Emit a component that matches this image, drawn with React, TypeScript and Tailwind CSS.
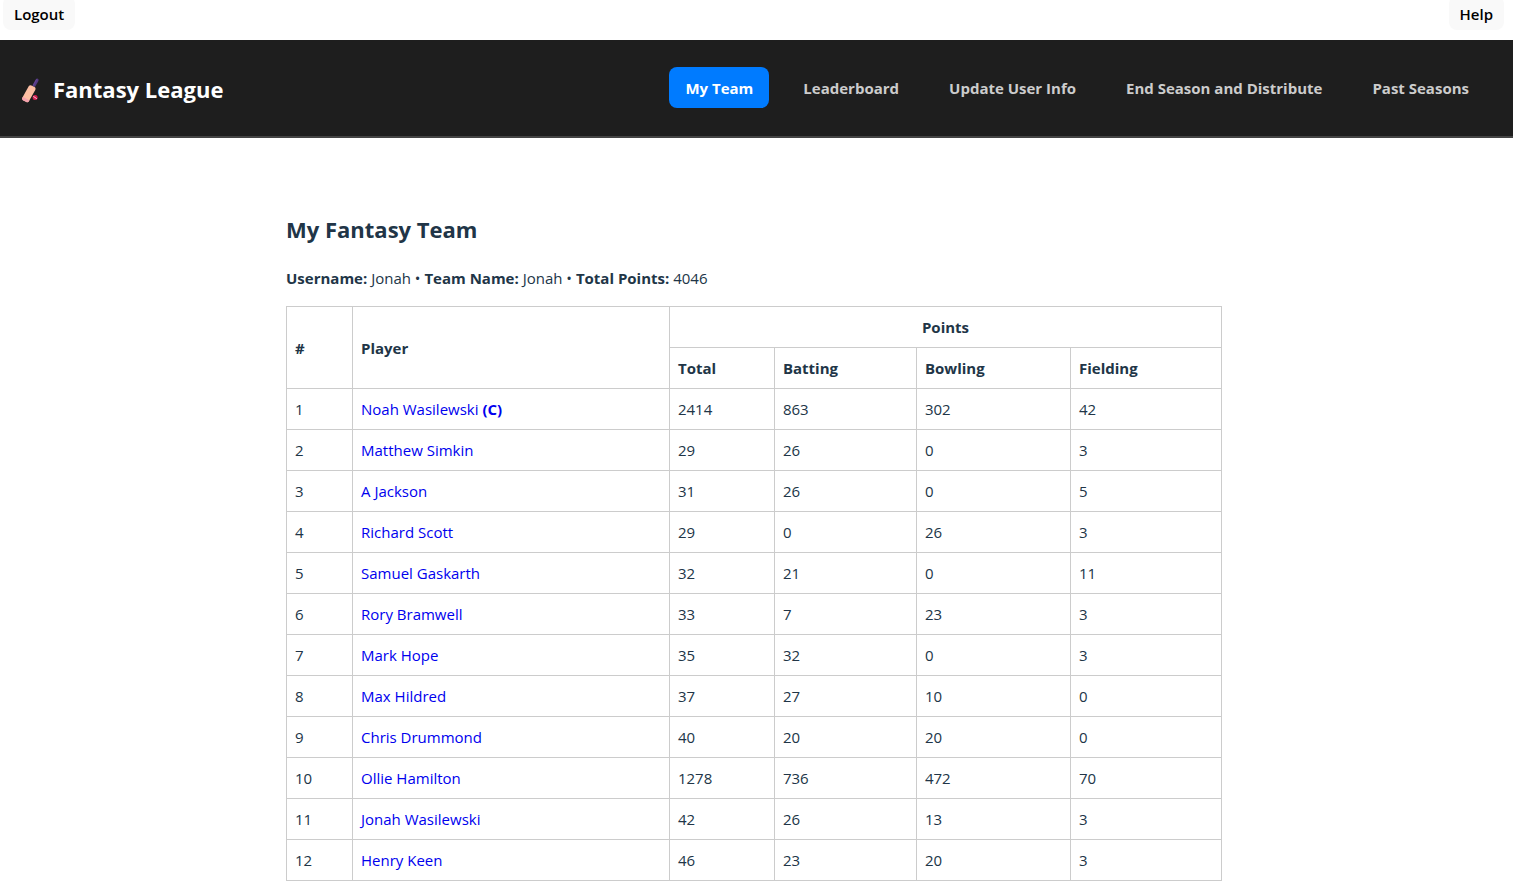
type Player = {
  name: string;
  captain?: boolean;
  total: number;
  batting: number;
  bowling: number;
  fielding: number;
};

const players: Player[] = [
  { name: "Noah Wasilewski", captain: true, total: 2414, batting: 863, bowling: 302, fielding: 42 },
  { name: "Matthew Simkin", total: 29, batting: 26, bowling: 0, fielding: 3 },
  { name: "A Jackson", total: 31, batting: 26, bowling: 0, fielding: 5 },
  { name: "Richard Scott", total: 29, batting: 0, bowling: 26, fielding: 3 },
  { name: "Samuel Gaskarth", total: 32, batting: 21, bowling: 0, fielding: 11 },
  { name: "Rory Bramwell", total: 33, batting: 7, bowling: 23, fielding: 3 },
  { name: "Mark Hope", total: 35, batting: 32, bowling: 0, fielding: 3 },
  { name: "Max Hildred", total: 37, batting: 27, bowling: 10, fielding: 0 },
  { name: "Chris Drummond", total: 40, batting: 20, bowling: 20, fielding: 0 },
  { name: "Ollie Hamilton", total: 1278, batting: 736, bowling: 472, fielding: 70 },
  { name: "Jonah Wasilewski", total: 42, batting: 26, bowling: 13, fielding: 3 },
  { name: "Henry Keen", total: 46, batting: 23, bowling: 20, fielding: 3 },
];

const navItems = ["My Team", "Leaderboard", "Update User Info", "End Season and Distribute", "Past Seasons"];

const cell = "border border-[#ccc] px-2 py-2";

function CricketBat() {
  return (
    <svg viewBox="0 0 24 26" className="h-[26px] w-6 shrink-0" aria-hidden="true">
      <path d="M14.4 8.6 17.7 2.6Q18.6 1.2 19.9 1.8 21.1 2.5 20.4 3.9L16.9 9.9Z" fill="#533a83" />
      <path d="M18.6 2.3 15.2 8.6" stroke="#6a4899" strokeWidth="0.8" />
      <path d="M10.7 9.2Q11.8 7.7 13.4 8.4L16.6 10.1Q18.1 11 17.4 12.7L10.9 24.2Q10.1 25.8 8.4 25.1L4.9 23.2Q3.5 22.3 4.3 20.8Z" fill="#fdbfa3" />
      <path d="M5.1 20.1 11.4 23.3 10.9 24.2Q10.1 25.8 8.4 25.1L4.9 23.2Q3.5 22.3 4.3 20.8Z" fill="#f5a2ae" />
      <circle cx="17.1" cy="20.5" r="2.5" fill="#d51f52" />
      <path d="M15.3 19.3 18.8 21.7" stroke="#f9c5d4" strokeWidth="1" />
    </svg>
  );
}

export default function App() {
  return (
    <div className="min-h-screen bg-white font-['Open_Sans','Noto_Sans',sans-serif] text-[15px] leading-6 text-[#213547]">
      <div className="flex h-10 items-start justify-between overflow-hidden pr-[9px] pl-[3px] text-black">
        <button type="button" className="-mt-1 rounded-lg bg-[#f9f9f9] px-[11px] pt-[6px] pb-1 font-semibold">
          Logout
        </button>
        <button type="button" className="-mt-1 rounded-lg bg-[#f9f9f9] px-[11px] pt-[6px] pb-1 font-semibold">
          Help
        </button>
      </div>

      <header className="flex items-start justify-between border-b-2 border-[#444] bg-[#1e1e1e] pt-[27px] pr-7 pb-[24px] pl-[18px]">
        <div className="flex items-center gap-[11px] text-[22px] leading-[45px] font-bold text-white">
          <CricketBat />
          Fantasy League
        </div>
        <nav className="flex gap-[18px]">
          {navItems.map((item, i) => (
            <a
              key={item}
              href="#"
              className={
                i === 0
                  ? "rounded-lg bg-[#007bff] px-4 pt-[9px] pb-2 font-bold whitespace-nowrap text-white"
                  : "rounded-lg px-4 pt-[9px] pb-2 font-bold whitespace-nowrap text-[#ccc]"
              }
            >
              {item}
            </a>
          ))}
        </nav>
      </header>

      <main className="mr-[5px]">
        <div className="mx-auto max-w-[1000px] px-8 pt-[73px]">
          <h2 className="text-[22px] leading-9 font-bold">My Fantasy Team</h2>
          <p className="mt-[19px] mb-4">
            <strong>Username:</strong> Jonah • <strong>Team Name:</strong> Jonah • <strong>Total Points:</strong> 4046
          </p>
          <table className="w-full table-fixed border-collapse text-left">
            <colgroup>
              <col className="w-[66px]" />
              <col />
              <col className="w-[105px]" />
              <col className="w-[142px]" />
              <col className="w-[154px]" />
              <col className="w-[151px]" />
            </colgroup>
            <thead>
              <tr>
                <th rowSpan={2} className={cell}>#</th>
                <th rowSpan={2} className={cell}>Player</th>
                <th colSpan={4} className="border border-[#ccc] px-2 py-2 text-center">Points</th>
              </tr>
              <tr>
                <th className={cell}>Total</th>
                <th className={cell}>Batting</th>
                <th className={cell}>Bowling</th>
                <th className={cell}>Fielding</th>
              </tr>
            </thead>
            <tbody>
              {players.map((p, i) => (
                <tr key={p.name}>
                  <td className={cell}>{i + 1}</td>
                  <td className={cell}>
                    <a href="#" className="text-[#00e]">
                      {p.name}
                      {p.captain && <strong> (C)</strong>}
                    </a>
                  </td>
                  <td className={cell}>{p.total}</td>
                  <td className={cell}>{p.batting}</td>
                  <td className={cell}>{p.bowling}</td>
                  <td className={cell}>{p.fielding}</td>
                </tr>
              ))}
            </tbody>
          </table>
        </div>
      </main>
    </div>
  );
}
